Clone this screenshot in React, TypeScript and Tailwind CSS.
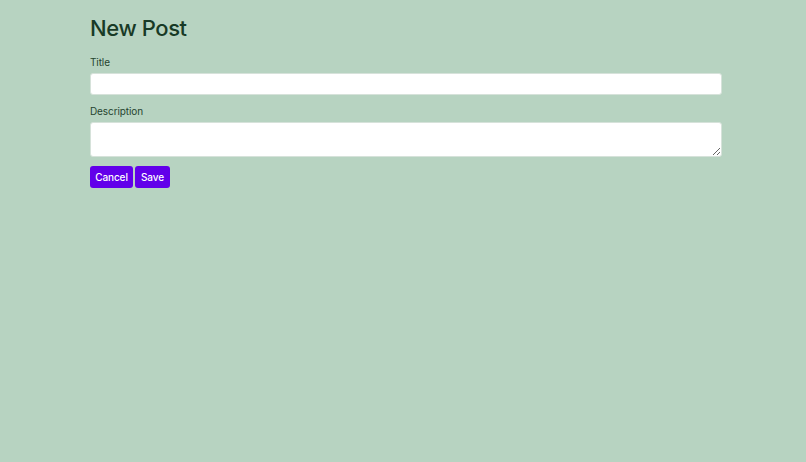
export default function App() {
  return (
    <div className="min-h-screen w-full bg-[#b7d3c1] font-['Inter','Liberation_Sans',sans-serif]">
      <div className="ml-[90px] w-[632px] pt-[14px]">
        <h1 className="text-[22px] font-medium leading-[28px] tracking-[-0.4px] text-[#183a26]">New Post</h1>
        <form className="mt-[14px] flex flex-col">
          <label className="text-[10px] leading-[12px] tracking-[-0.1px] text-[#26442f]">Title</label>
          <input type="text" className="mt-[5px] h-[22px] w-full rounded-[3px] border border-[#d6e2da] bg-white px-2 text-[12px] outline-none" />
          <label className="mt-[10px] text-[10px] leading-[12px] tracking-[-0.1px] text-[#26442f]">Description</label>
          <textarea className="mt-[5px] h-[35px] w-full rounded-[3px] border border-[#d6e2da] bg-white px-2 text-[12px] outline-none" />
          <div className="mt-[9px] flex gap-[2px]">
            <button type="button" className="h-[22px] w-[43px] rounded-[3px] bg-[#6200ea] text-[10px] font-medium tracking-[-0.1px] text-white">Cancel</button>
            <button type="button" className="h-[22px] w-[35px] rounded-[3px] bg-[#6200ea] text-[10px] font-medium tracking-[-0.1px] text-white">Save</button>
          </div>
        </form>
      </div>
    </div>
  );
}
